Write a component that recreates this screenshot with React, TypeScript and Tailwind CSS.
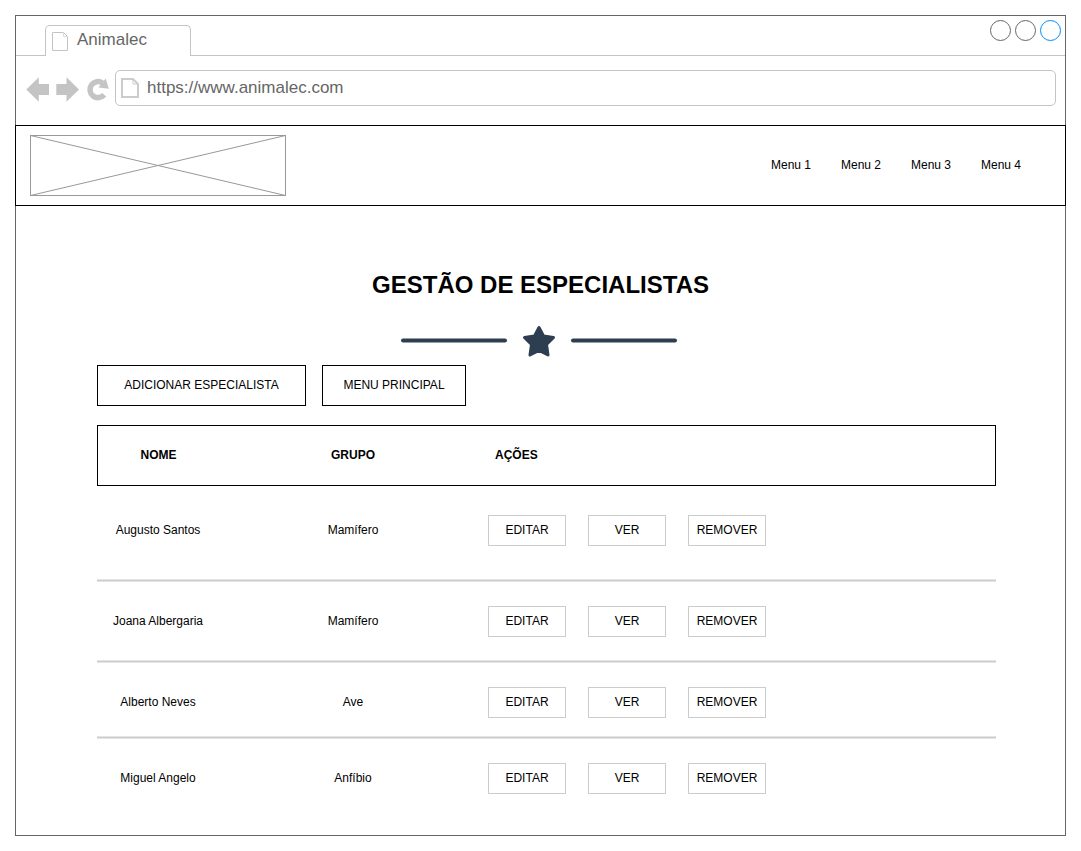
type Specialist = { name: string; group: string; cell: string };

const specialists: Specialist[] = [
  { name: "Augusto Santos", group: "Mamífero", cell: "pt-[29px] pb-[35px]" },
  { name: "Joana Albergaria", group: "Mamífero", cell: "pt-6 pb-[25px]" },
  { name: "Alberto Neves", group: "Ave", cell: "pt-6 pb-5" },
  { name: "Miguel Angelo", group: "Anfíbio", cell: "pt-6" },
];

const actions = ["EDITAR", "VER", "REMOVER"];
const menus = ["Menu 1", "Menu 2", "Menu 3", "Menu 4"];

const divider =
  "border-b border-[#e5e5e5] shadow-[inset_0_-1px_0_#cccccc,inset_0_-2px_0_#e5e5e5]";

function BrowserBar() {
  return (
    <div className="border-x border-t border-[#666666] text-[17px] leading-5 text-[#666666]">
      <div className="flex h-10 items-end">
        <div className="w-[29px] self-stretch border-b border-[#c4c4c4]" />
        <div className="flex h-[31px] w-[146px] items-start gap-2 rounded-t-[5px] border-x border-t border-[#c4c4c4] pt-1 pl-1.5">
          <svg className="mt-0.5 h-5 w-[17px]" viewBox="0 0 17 20" fill="none" stroke="#c4c4c4">
            <path d="M.5 .5H11.5L15.5 4.5V18.5H.5Z" />
            <path d="M11.5 .5V4.5H15.5" stroke="#dddddd" />
          </svg>
          <span>Animalec</span>
        </div>
        <div className="flex flex-1 justify-end gap-1 self-stretch border-b border-[#c4c4c4] pt-1 pr-1">
          <button aria-label="Minimizar" className="size-[21px] rounded-full border border-[#666666]" />
          <button aria-label="Maximizar" className="size-[21px] rounded-full border border-[#666666]" />
          <button aria-label="Fechar" className="size-[21px] rounded-full border border-[#008cff]" />
        </div>
      </div>
      <div className="flex h-[69px] items-start gap-1.5 pt-3.5 pr-[9px] pl-2.5">
        <div className="flex h-9 items-center gap-[7px] pt-0.5">
          <button aria-label="Voltar">
            <svg className="h-[25px] w-[23px]" viewBox="0 0 23 25" fill="#c4c4c4">
              <path d="M.3 12.500L12.800 .3V7H23V18H12.800V24.700Z" />
            </svg>
          </button>
          <button aria-label="Avançar">
            <svg className="h-[25px] w-[23px]" viewBox="0 0 23 25" fill="#c4c4c4">
              <path d="M23 12.500L10.500 .3V7H.3V18H10.500V24.700Z" />
            </svg>
          </button>
          <button aria-label="Recarregar">
            <svg className="h-[25px] w-[23px]" viewBox="0 0 23 25">
              <path d="M18.200 17.700A8 8 0 1 1 16.500 6" fill="none" stroke="#c4c4c4" strokeWidth="5.500" />
              <path d="M19.800 1.500L22.800 11.800L12.500 10.500Z" fill="#c4c4c4" />
            </svg>
          </button>
        </div>
        <div className="flex h-9 flex-1 items-center gap-2 rounded-[5px] border border-[#c4c4c4] pl-[5px]">
          <svg className="h-5 w-[18px]" viewBox="0 0 18 20" fill="none" stroke="#cccccc" strokeWidth="2">
            <path d="M1 1H12L17 6V19H1Z" />
            <path d="M12 1V6H17" strokeWidth="1" />
          </svg>
          <input
            aria-label="Endereço"
            defaultValue="https://www.animalec.com"
            className="min-w-0 flex-1 bg-transparent outline-none"
          />
        </div>
      </div>
    </div>
  );
}

function Header() {
  return (
    <header className="flex h-[81px] items-center justify-between border border-black pr-[29px] pl-3.5">
      <svg className="h-[61px] w-64" viewBox="0 0 256 61" fill="none" stroke="#999999">
        <rect x=".5" y=".5" width="255" height="60" />
        <path d="M.5 .5L255.500 60.500M255.500 .5L.5 60.500" />
      </svg>
      <nav className="flex pb-0.5 text-center">
        {menus.map((menu) => (
          <a key={menu} href="#" className="w-[70px]">
            {menu}
          </a>
        ))}
      </nav>
    </header>
  );
}

export default function App() {
  return (
    <div className="min-h-screen bg-white p-[15px] font-['Liberation_Sans',Arial,sans-serif] text-[12px] leading-4 text-black">
      <BrowserBar />
      <Header />
      <main className="border-x border-b border-[#666666] pt-16 pr-[69px] pb-[41px] pl-[81px]">
        <div className="-ml-3 flex flex-col items-center">
          <h1 className="text-[24px] leading-[30px] font-bold">GESTÃO DE ESPECIALISTAS</h1>
          <svg className="mt-6 h-9 w-[280px]" viewBox="0 0 280 36" fill="#2c3e50">
            <rect y="14.500" width="106" height="4" rx="2" />
            <rect x="170" y="14.500" width="106" height="4" rx="2" />
            <path
              d="M138 3.500L142.500 12L152.500 13.500L145.500 20.500L147 31L138 26.500L129 31L130.500 20.500L123.500 13.500L133.500 12Z"
              stroke="#2c3e50"
              strokeWidth="3"
              strokeLinejoin="round"
            />
          </svg>
        </div>
        <div className="mt-[5px] flex gap-4">
          <button className="h-[41px] w-[209px] border border-black pb-0.5">ADICIONAR ESPECIALISTA</button>
          <button className="h-[41px] w-36 border border-black pb-0.5">MENU PRINCIPAL</button>
        </div>
        <table className="mt-[19px] w-full table-fixed border-separate border-spacing-0">
          <thead>
            <tr className="h-[61px]">
              <th className="w-[122px] border-y border-l border-black pb-0.5">NOME</th>
              <th className="w-[268px] border-y border-black pb-0.5">GRUPO</th>
              <th className="border-y border-r border-black pb-0.5 pl-2 text-left">AÇÕES</th>
            </tr>
          </thead>
          <tbody>
            {specialists.map(({ name, group, cell }, i) => {
              const line = i < specialists.length - 1 ? divider : "";
              return (
                <tr key={name} className="text-center">
                  <td className={`${cell} ${line}`}>
                    <div className="pb-0.5">{name}</div>
                  </td>
                  <td className={`${cell} ${line}`}>
                    <div className="pb-0.5">{group}</div>
                  </td>
                  <td className={`${cell} ${line} pl-px`}>
                    <div className="flex gap-[22px]">
                      {actions.map((action) => (
                        <button key={action} className="h-[31px] w-[78px] border border-[#cccccc] pb-0.5">
                          {action}
                        </button>
                      ))}
                    </div>
                  </td>
                </tr>
              );
            })}
          </tbody>
        </table>
      </main>
    </div>
  );
}
